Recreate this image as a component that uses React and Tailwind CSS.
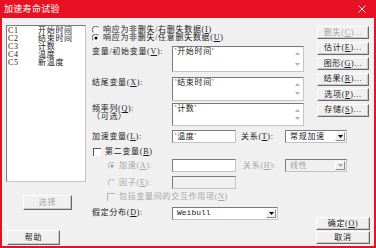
import React from 'react';

const font = "font-['Liberation_Serif','Noto_Sans_CJK_SC',serif]";

function Btn({ children, disabled, className = '' }) {
  return (
    <div
      className={`flex items-center justify-center h-[13px] bg-[#f0f0f0] border border-t-white border-l-white border-r-[#696969] border-b-[#696969] shadow-[inset_-1px_-1px_0_#c8c8c8] text-[8px] leading-[8px] ${
        disabled ? 'text-[#a6a6a6]' : 'text-[#1a1a1a]'
      } ${className}`}
    >
      {children}
    </div>
  );
}

function Radio({ checked, disabled }) {
  return (
    <svg width="8" height="8" viewBox="0 0 8 8" className="shrink-0">
      <circle cx="4" cy="4" r="3.5" fill={disabled ? '#f0f0f0' : 'white'} />
      <path d="M1.2 6.3 A3.4 3.4 0 0 1 6.3 1.2" stroke={disabled ? '#b0b0b0' : '#555'} fill="none" strokeWidth="1" />
      {checked && <circle cx="4" cy="4" r="1.6" fill={disabled ? '#9a9a9a' : 'black'} />}
    </svg>
  );
}

function Check({ disabled }) {
  return (
    <div
      className={`w-[8px] h-[8px] shrink-0 border-t border-l border-b-0 border-r-0 ${
        disabled ? 'border-[#b0b0b0] bg-[#f0f0f0]' : 'border-[#555] bg-white'
      }`}
    />
  );
}

function Arrows() {
  return (
    <div className="w-[12px] flex flex-col justify-between items-center py-[5px]">
      <svg width="5" height="3" viewBox="0 0 5 3">
        <path d="M2.5 0 L5 3 L0 3 Z" fill="#b4b4b4" />
      </svg>
      <svg width="5" height="3" viewBox="0 0 5 3">
        <path d="M0 0 L5 0 L2.5 3 Z" fill="#b4b4b4" />
      </svg>
    </div>
  );
}

function BigBox({ text, h }) {
  return (
    <div className={`flex w-[132px] ${h} bg-white border border-[#c4c4c4] border-t-[#7a7a7a] border-l-[#7a7a7a]`}>
      <div className="flex-1 pl-[2px] pt-[1px]">{text}</div>
      <Arrows />
    </div>
  );
}

function Drop({ text, disabled, className = '' }) {
  return (
    <div
      className={`flex items-center h-[13px] border border-[#c4c4c4] border-t-[#7a7a7a] border-l-[#7a7a7a] ${
        disabled ? 'bg-[#f0f0f0] text-[#a6a6a6]' : 'bg-white text-[#1a1a1a]'
      } ${className}`}
    >
      <div className="flex-1 pl-[4px]">{text}</div>
      <div className="w-[10px] h-[9px] mr-[1px] flex items-center justify-center border border-t-white border-l-white border-r-[#8a8a8a] border-b-[#8a8a8a] bg-[#f0f0f0]">
        <svg width="5" height="3" viewBox="0 0 5 3">
          <path d="M0 0 L5 0 L2.5 3 Z" fill={disabled ? '#a6a6a6' : 'black'} />
        </svg>
      </div>
    </div>
  );
}

const cols = [
  ['C1', '开始时间'],
  ['C2', '结束时间'],
  ['C3', '计数'],
  ['C4', '温度'],
  ['C5', '新温度'],
];

export default function App() {
  return (
    <div
      className={`w-[376px] h-[248px] bg-[#e81123] flex flex-col ${font} text-[8px] leading-[8px] tracking-[0.7px] text-[#1a1a1a] overflow-hidden`}
    >
      {/* Title bar */}
      <div className="h-[18px] flex items-center justify-between pl-[4px] pr-[10px] text-white">
        <span className="text-[9px] leading-[9px] tracking-[0.3px]">加速寿命试验</span>
        <svg width="8" height="8" viewBox="0 0 8 8">
          <path d="M0.5 0.5 L7.5 7.5 M7.5 0.5 L0.5 7.5" stroke="white" strokeWidth="0.9" />
        </svg>
      </div>

      {/* Body */}
      <div className="flex-1 mx-[2px] mb-[2px] bg-[#f0f0f0] flex">
        {/* Left column */}
        <div className="w-[80px] ml-[4px] flex flex-col">
          <div className="mt-[7px] h-[157px] bg-white border border-[#c4c4c4] border-t-[#7a7a7a] border-l-[#7a7a7a] pt-[1px] pl-[1px]">
            {cols.map(([c, n]) => (
              <div key={c} className="flex h-[8px]">
                <span className="w-[30px]">{c}</span>
                <span>{n}</span>
              </div>
            ))}
          </div>
          <Btn disabled className="mt-[13px] ml-[17px] w-[49px] h-[15px]">
            选择
          </Btn>
          <Btn className="mt-[20px] ml-[1px] w-[53px] h-[15px]">帮助</Btn>
        </div>

        {/* Middle column */}
        <div className="w-[256px] ml-[6px] flex flex-col">
          <div className="mt-[8px] h-[8px] flex items-center gap-[3px]">
            <Radio />
            <span>
              响应为非删失/右删失数据(<u>I</u>)
            </span>
          </div>
          <div className="h-[8px] flex items-center gap-[3px]">
            <Radio checked />
            <span>
              响应为非删失/任意删失数据(<u>U</u>)
            </span>
          </div>

          <div className="mt-[4px] flex">
            <div className="w-[80px] pt-[2px]">
              变量/初始变量(<u>V</u>):
            </div>
            <BigBox text="'开始时间'" h="h-[26px]" />
          </div>

          <div className="mt-[5px] flex">
            <div className="w-[80px] pt-[2px]">
              结尾变量(<u>X</u>):
            </div>
            <BigBox text="'结束时间'" h="h-[24px]" />
          </div>

          <div className="mt-[2px] flex">
            <div className="w-[80px] pt-[2px] flex flex-col">
              <span>
                频率列(<u>Q</u>):
              </span>
              <span>（可选）</span>
            </div>
            <BigBox text="'计数'" h="h-[23px]" />
          </div>

          <div className="mt-[4px] flex items-center h-[13px]">
            <div className="w-[80px]">
              加速变量(<u>L</u>):
            </div>
            <div className="w-[64px] h-[13px] bg-white border border-[#c4c4c4] border-t-[#7a7a7a] border-l-[#7a7a7a] pl-[2px] flex items-center">
              '温度'
            </div>
            <span className="ml-[5px] w-[44px]">
              关系(<u>T</u>):
            </span>
            <Drop text="常规加速" className="w-[62px]" />
          </div>

          <div className="mt-[5px] h-[8px] flex items-center gap-[4px] pl-[1px]">
            <Check />
            <span>
              第二变量(<u>B</u>)
            </span>
          </div>

          <div className="mt-[3px] flex items-center h-[13px] text-[#a6a6a6]">
            <div className="w-[80px] pl-[16px] flex items-center gap-[3px]">
              <Radio checked disabled />
              <span>
                加速(<u>A</u>):
              </span>
            </div>
            <div className="w-[64px] h-[13px] bg-white border border-[#c4c4c4] border-t-[#7a7a7a] border-l-[#7a7a7a]" />
            <span className="ml-[7px] w-[42px]">
              关系(<u>H</u>):
            </span>
            <Drop text="线性" disabled className="w-[62px]" />
          </div>

          <div className="mt-[4px] flex items-center h-[13px] text-[#a6a6a6]">
            <div className="w-[80px] pl-[16px] flex items-center gap-[3px]">
              <Radio disabled />
              <span>
                因子(<u>E</u>):
              </span>
            </div>
            <div className="w-[64px] h-[13px] bg-[#f0f0f0] border border-[#c4c4c4] border-t-[#7a7a7a] border-l-[#7a7a7a]" />
          </div>

          <div className="mt-[4px] h-[8px] flex items-center gap-[4px] pl-[15px] text-[#a6a6a6]">
            <Check disabled />
            <span>
              包括变量间的交互作用项(<u>N</u>)
            </span>
          </div>

          <div className="mt-[6px] flex items-center h-[12px]">
            <div className="w-[80px]">
              假定分布(<u>D</u>):
            </div>
            <Drop text="Weibull" className="w-[106px] h-[12px] font-['Liberation_Mono',monospace] tracking-normal" />
          </div>
        </div>

        {/* Right column */}
        <div className="ml-[-31px] w-[52px] flex flex-col">
          <div className="mt-[8px] flex flex-col gap-[2.6px]">
            <Btn disabled>删失(<u>C</u>)...</Btn>
            <Btn>估计(<u>E</u>)...</Btn>
            <Btn>图形(<u>G</u>)...</Btn>
            <Btn>结果(<u>R</u>)...</Btn>
            <Btn>选项(<u>P</u>)...</Btn>
            <Btn>存储(<u>S</u>)...</Btn>
          </div>
          <div className="mt-auto mb-[2px] flex flex-col gap-[1px] -ml-[1px] w-[54px]">
            <Btn>确定(<u>O</u>)</Btn>
            <Btn>取消</Btn>
          </div>
        </div>
      </div>
    </div>
  );
}
